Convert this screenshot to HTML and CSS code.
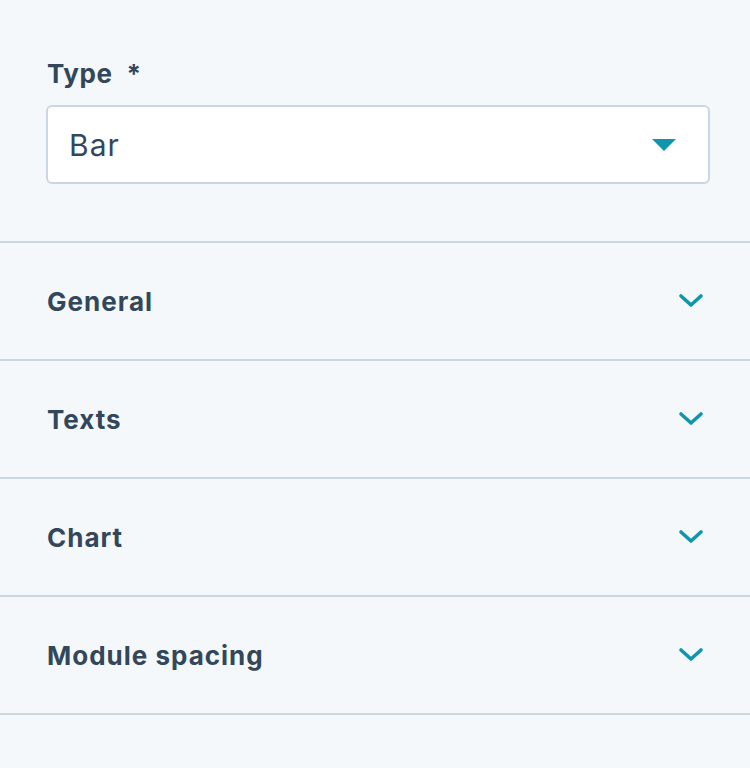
FILE: index.html
```html
<!DOCTYPE html>
<html>
<head>
<meta charset="utf-8">
<link rel="stylesheet" href="styles.css">
</head>
<body>
<div class="panel">
  <div class="field">
    <label class="label">Type <span class="req">*</span></label>
    <div class="select">
      <span class="value">Bar</span>
      <svg class="caret" width="24" height="13" viewBox="0 0 24 13"><path d="M0 0H24L12 12Z" fill="#0f96ad"/></svg>
    </div>
  </div>
  <div class="section">
    <span class="title">General</span>
    <svg class="chev" width="26" height="16" viewBox="0 0 26 16"><path d="M3 3L13 12L23 3" fill="none" stroke="#0f96ad" stroke-width="3.6" stroke-linecap="round" stroke-linejoin="round"/></svg>
  </div>
  <div class="section">
    <span class="title">Texts</span>
    <svg class="chev" width="26" height="16" viewBox="0 0 26 16"><path d="M3 3L13 12L23 3" fill="none" stroke="#0f96ad" stroke-width="3.6" stroke-linecap="round" stroke-linejoin="round"/></svg>
  </div>
  <div class="section">
    <span class="title">Chart</span>
    <svg class="chev" width="26" height="16" viewBox="0 0 26 16"><path d="M3 3L13 12L23 3" fill="none" stroke="#0f96ad" stroke-width="3.6" stroke-linecap="round" stroke-linejoin="round"/></svg>
  </div>
  <div class="section">
    <span class="title">Module spacing</span>
    <svg class="chev" width="26" height="16" viewBox="0 0 26 16"><path d="M3 3L13 12L23 3" fill="none" stroke="#0f96ad" stroke-width="3.6" stroke-linecap="round" stroke-linejoin="round"/></svg>
  </div>
</div>
</body>
</html>
```
FILE: styles.css
```css
html, body {
  margin: 0;
  padding: 0;
  background: #f5f8fa;
}
body {
  font-family: "Inter", "Open Sans", sans-serif;
  color: #33475b;
  width: 750px;
  height: 768px;
  overflow: hidden;
}
.panel {
  display: flex;
  flex-direction: column;
}
.field {
  padding: 56px 40px 57px 46px;
  border-bottom: 2px solid #cbd6e2;
}
.label {
  display: block;
  font-size: 26px;
  font-weight: 700;
  letter-spacing: 0.6px;
  line-height: 36px;
  margin-left: 1px;
  margin-bottom: 13px;
}
.req {
  margin-left: 7px;
}
.select {
  height: 75px;
  background: #fff;
  border: 2px solid #cbd6e2;
  border-radius: 6px;
  display: flex;
  align-items: center;
  justify-content: space-between;
  padding: 0 32px 0 21px;
}
.value {
  font-size: 30px;
  font-weight: 400;
  letter-spacing: 1px;
}
.caret {
  display: block;
  margin-top: 2px;
}
.section {
  height: 116px;
  border-bottom: 2px solid #cbd6e2;
  display: flex;
  align-items: center;
  justify-content: space-between;
  padding: 0 46px 0 47px;
}
.title {
  font-size: 26px;
  font-weight: 700;
  letter-spacing: 1px;
}
.chev {
  display: block;
}
```
